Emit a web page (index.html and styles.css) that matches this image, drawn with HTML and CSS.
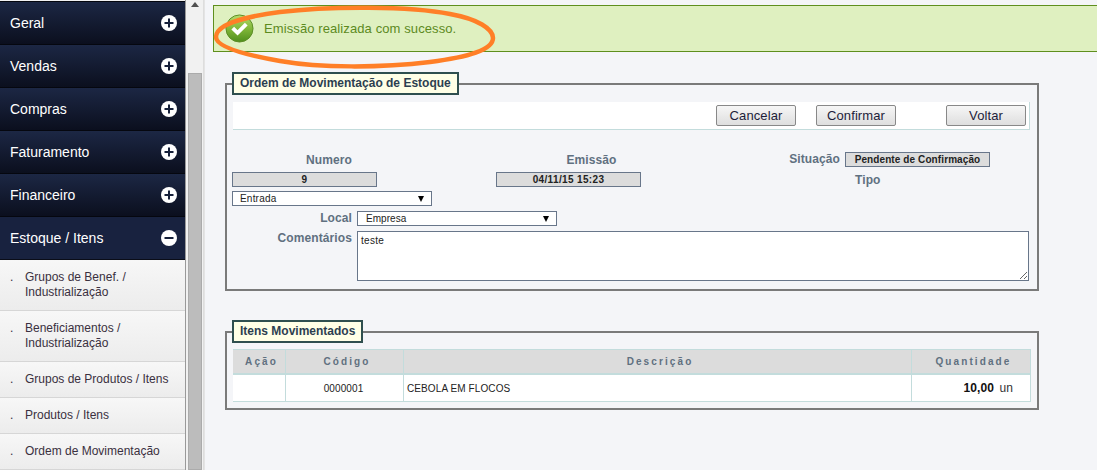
FILE: index.html
```html
<!DOCTYPE html>
<html lang="pt">
<head>
<meta charset="utf-8">
<title>Ordem de Movimentação de Estoque</title>
<link rel="stylesheet" href="styles.css">
</head>
<body>
<div class="page">
  <nav class="side">
    <div class="menu-head"><span>Geral</span><svg class="tog" viewBox="0 0 16 16"><circle cx="8" cy="8" r="8" fill="#fff"/><path d="M8 3.5v9M3.5 8h9" stroke="#16203a" stroke-width="2"/></svg></div>
    <div class="menu-head"><span>Vendas</span><svg class="tog" viewBox="0 0 16 16"><circle cx="8" cy="8" r="8" fill="#fff"/><path d="M8 3.5v9M3.5 8h9" stroke="#16203a" stroke-width="2"/></svg></div>
    <div class="menu-head"><span>Compras</span><svg class="tog" viewBox="0 0 16 16"><circle cx="8" cy="8" r="8" fill="#fff"/><path d="M8 3.5v9M3.5 8h9" stroke="#16203a" stroke-width="2"/></svg></div>
    <div class="menu-head"><span>Faturamento</span><svg class="tog" viewBox="0 0 16 16"><circle cx="8" cy="8" r="8" fill="#fff"/><path d="M8 3.5v9M3.5 8h9" stroke="#16203a" stroke-width="2"/></svg></div>
    <div class="menu-head"><span>Financeiro</span><svg class="tog" viewBox="0 0 16 16"><circle cx="8" cy="8" r="8" fill="#fff"/><path d="M8 3.5v9M3.5 8h9" stroke="#16203a" stroke-width="2"/></svg></div>
    <div class="menu-head open"><span>Estoque / Itens</span><svg class="tog" viewBox="0 0 16 16"><circle cx="8" cy="8" r="8" fill="#fff"/><path d="M3.5 8h9" stroke="#16203a" stroke-width="2"/></svg></div>
    <div class="sub two"><i>.</i><span>Grupos de Benef. / Industrialização</span></div>
    <div class="sub two"><i>.</i><span>Beneficiamentos / Industrialização</span></div>
    <div class="sub"><i>.</i><span>Grupos de Produtos / Itens</span></div>
    <div class="sub"><i>.</i><span>Produtos / Itens</span></div>
    <div class="sub"><i>.</i><span>Ordem de Movimentação</span></div>
  </nav>
  <div class="scroll">
    <svg class="arrow" viewBox="0 0 8 5"><path d="M4 0l4 5H0z" fill="#505050"/></svg>
    <div class="thumb"></div>
  </div>
  <main class="main">
    <div class="success">
      <svg class="ok" viewBox="0 0 30 30">
        <defs><linearGradient id="g" x1="0" y1="0" x2="0" y2="1"><stop offset="0" stop-color="#b4dc6c"/><stop offset=".5" stop-color="#82b83a"/><stop offset="1" stop-color="#4f8e1c"/></linearGradient></defs>
        <circle cx="15" cy="15" r="14" fill="url(#g)" stroke="#5b8c25"/>
        <path d="M8 14.5l5 5 9-9" fill="none" stroke="#fff" stroke-width="4"/>
      </svg>
      <span>Emissão realizada com sucesso.</span>
    </div>
    <svg class="mark" viewBox="0 0 290 70"><path d="M70 10C120 4 200 4 240 12C268 17 283 27 283 36C283 48 258 55 220 60C170 66 110 66 70 59C30 52 6 44 6 35C6 24 30 15 70 10Z" fill="none" stroke="#ff7f27" stroke-width="4.5"/></svg>

    <fieldset class="panel first">
      <legend>Ordem de Movimentação de Estoque</legend>
      <div class="bar">
        <button class="btn">Cancelar</button>
        <button class="btn">Confirmar</button>
        <button class="btn last">Voltar</button>
      </div>
      <div class="form">
        <div class="fields">
          <div class="col c1"><label class="lb">Numero</label><div class="ro">9</div></div>
          <div class="col c2"><label class="lb">Emissão</label><div class="ro">04/11/15 15:23</div></div>
          <div class="col c3">
            <div class="sit"><label class="lb">Situação</label><div class="ro">Pendente de Confirmação</div></div>
            <label class="lb tipo">Tipo</label>
          </div>
        </div>
        <div class="sel entrada"><span>Entrada</span><b></b></div>
        <div class="line"><label class="lb side-lb">Local</label><div class="sel"><span>Empresa</span><b></b></div></div>
        <div class="line"><label class="lb side-lb">Comentários</label>
          <div class="area">teste
            <svg class="grip" viewBox="0 0 8 8"><path d="M8 1L1 8M8 5L5 8" stroke="#666" fill="none"/></svg>
          </div>
        </div>
      </div>
    </fieldset>

    <fieldset class="panel second">
      <legend>Itens Movimentados</legend>
      <table class="tbl">
        <thead><tr><th class="t1">Ação</th><th class="t2">Código</th><th>Descrição</th><th class="t4">Quantidade</th></tr></thead>
        <tbody><tr><td></td><td class="ctr">0000001</td><td>CEBOLA EM FLOCOS</td><td class="qt"><b>10,00</b> <span>un</span></td></tr></tbody>
      </table>
    </fieldset>
  </main>
</div>
</body>
</html>
```
FILE: styles.css
```css
* { box-sizing: border-box; }
html, body { margin: 0; height: 100%; overflow: hidden; }
body { font-family: "Liberation Sans", Arial, sans-serif; background: #f4f5f8; }
.page { display: flex; width: 1097px; height: 470px; overflow: hidden; }

.side { width: 186px; flex: none; border-right: 1px solid #999; padding-top: 1px; background: #f1f1f1; }
.menu-head {
  height: 43px; display: flex; align-items: center; justify-content: space-between;
  padding: 0 8px 0 10px; color: #fff; font-size: 14px;
  background: linear-gradient(#1c2744, #0b0f1e);
  border-top: 1px solid #05070f;
}
.menu-head.open { background: #18223f; height: 44px; border-bottom: 1px solid #0a0d18; }
.tog { width: 16px; height: 16px; display: block; }
.sub {
  height: 36px; display: flex; align-items: center; padding-left: 10px;
  font-size: 12px; line-height: 15px; color: #3a3040;
  background: linear-gradient(#f7f7f7, #ececec);
  border-bottom: 1px solid #d6d6d6;
}
.sub.two { height: 51px; }
.sub.two i { align-self: flex-start; margin-top: 10px; }
.sub i { width: 15px; flex: none; font-style: normal; }
.sub span { width: 150px; }

.scroll { width: 18px; flex: none; background: #f1f1f1; position: relative; border-right: 1px solid #ddd; }
.arrow { display: block; width: 8px; height: 5px; margin: 2px 0 0 5px; }
.thumb { width: 14px; height: 397px; margin: 66px 0 0 2px; background: #bcbcbc; border: 1px solid #ababab; }

.main { flex: 1; position: relative; padding: 5px 0 0 8px; min-width: 0; background: #f4f5f8; border-left: 1px solid #e4e4e4; }
.success {
  height: 47px; display: flex; align-items: center; gap: 10px; padding-left: 11px;
  background: #dff0c0; border: 1px solid #5f8f1e; border-right: 0;
  color: #5c8a1e; font-size: 13px; letter-spacing: .1px;
}
.ok { width: 29px; height: 29px; flex: none; }
.mark { position: absolute; left: 5px; top: 2px; width: 290px; height: 70px; pointer-events: none; }

.panel {
  margin: 20px 0 0 12px; width: 814px; padding: 0 7px 8px 6px;
  border: 2px solid #7a7a7a; min-width: 0;
}
.panel legend {
  padding: 0 6px; margin: 0 0 0 -1px; height: 23px; line-height: 19px;
  background: #ffffe6; border: 2px solid #2f4f4f; font-size: 12px; font-weight: bold; color: #2c3e50;
}
.bar {
  height: 28px; margin-top: 7px; width: 797px; background: #fff; border-right: 1px solid #c3dcdc; border-bottom: 1px solid #c3dcdc;
  display: flex; align-items: center; padding-left: 483px;
}
.btn {
  width: 80px; height: 21px; padding: 0; margin-right: 20px; font: 13px "Liberation Sans", Arial, sans-serif;
  letter-spacing: .1px; color: #1d1d3a; border: 1px solid #888; border-radius: 2px; background: linear-gradient(#f6f6f6, #dedede);
}
.btn.last { margin: 0 0 0 30px; }

.form { margin-left: -1px; }
.fields { display: flex; margin-top: 22px; height: 39px; }
.lb { font-size: 12px; font-weight: bold; color: #607080; letter-spacing: .1px; }
.col { display: flex; flex-direction: column; width: 145px; text-align: center; }
.col .lb { height: 19px; line-height: 14px; }
.c1, .c2 { padding-top: 1px; }
.c1 .lb { padding-left: 49px; }
.c2 .lb { padding-left: 46px; }
.c2 { margin-left: 119px; }
.c3 { margin-left: 120px; width: 230px; }
.ro {
  height: 15px; line-height: 13px; border: 1px solid #68768a; background: #dcdcdc; text-align: center;
  font-size: 10px; font-weight: bold; color: #222; letter-spacing: .35px;
}
.sit { display: flex; justify-content: flex-start; align-items: center; height: 15px; gap: 5px; }
.sit .lb { height: 15px; width: 79px; text-align: right; }
.sit .ro { width: 145px; flex: none; letter-spacing: .1px; }
.tipo { margin-top: 6px; padding-left: 94px; text-align: left; }

.sel {
  width: 200px; height: 15px; display: flex; justify-content: space-between; align-items: center;
  padding: 0 7px 0 7px; background: #fff; border: 1px solid #68768a; font-size: 10px; color: #222; letter-spacing: .2px;
}
.sel b { width: 0; height: 0; border-left: 3px solid transparent; border-right: 3px solid transparent; border-top: 6px solid #000; }
.line { display: flex; margin-top: 5px; gap: 5px; }
.line .sel { padding-left: 8px; letter-spacing: .05px; }
.side-lb { width: 120px; text-align: right; line-height: 14px; }
.area {
  position: relative; width: 672px; height: 50px; background: #fff; border: 1px solid #68768a;
  padding: 3px 3px; font-size: 10px; color: #222; letter-spacing: .3px;
}
.grip { position: absolute; right: 1px; bottom: 1px; width: 8px; height: 8px; }

.second { margin-top: 29px; padding-bottom: 6px; }
.tbl {
  width: 798px; margin-top: 6px; border-collapse: separate; border-spacing: 0; table-layout: fixed; font-size: 10px; color: #222;
}
.tbl th {
  height: 26px; padding: 0 0 0 5px; background: #dcdcdc; border: 1px solid #c3dcdc; border-bottom-width: 2px; border-left-width: 0;
  font-size: 10px; font-weight: bold; color: #607080; letter-spacing: 2.1px;
}
.tbl td { height: 27px; padding: 0 3px; background: #fff; border-right: 1px solid #c3dcdc; border-bottom: 1px solid #c3dcdc; letter-spacing: .1px; }
.t1 { width: 53px; }
.t2 { width: 118px; }
.t4 { width: 119px; }
.ctr { text-align: center; padding-right: 5px !important; }
.qt { text-align: right; font-size: 12px; padding-right: 17px !important; }
.qt b { color: #111; }
.qt span { color: #333; margin-left: 2px; }
```
